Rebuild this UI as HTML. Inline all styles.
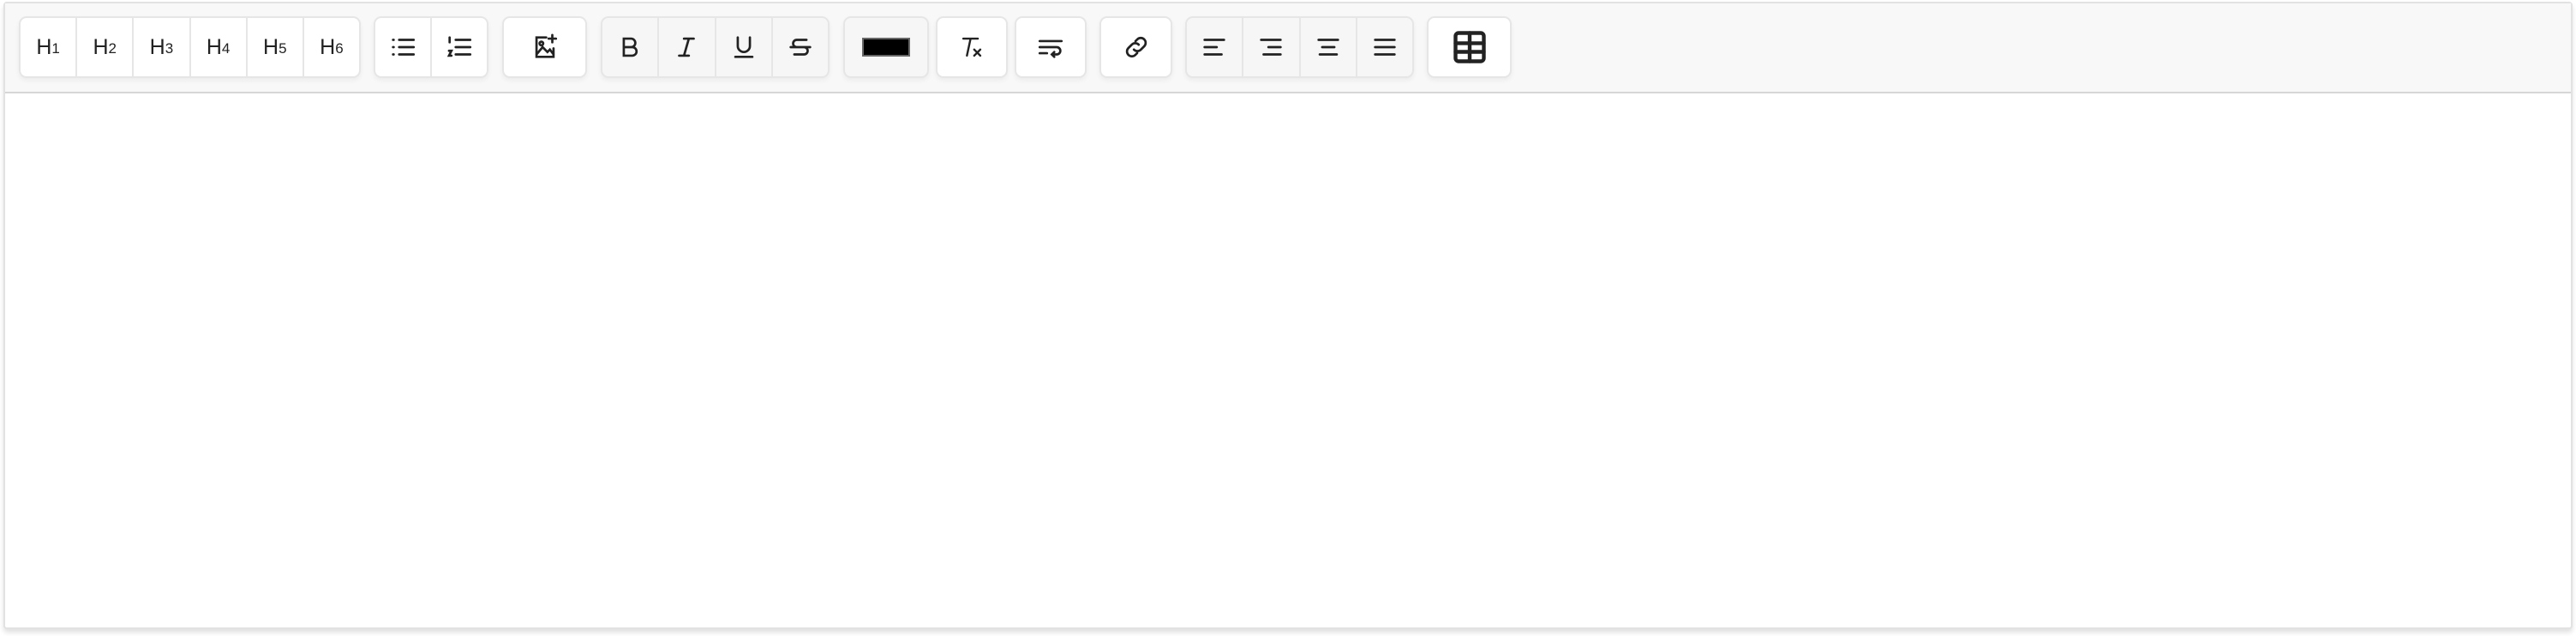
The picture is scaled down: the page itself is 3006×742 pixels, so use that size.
<!DOCTYPE html>
<html><head><meta charset="utf-8"><style>
*{box-sizing:border-box;margin:0;padding:0}
body{width:3006px;height:742px;background:#fff;font-family:"Liberation Sans",sans-serif;position:relative;overflow:hidden}
.ed{position:absolute;left:4px;top:2px;width:2998px;height:732px;border:2px solid #e2e2e2;border-radius:4px;box-shadow:0 4px 6px rgba(0,0,0,.12);background:#fff}
.tb{position:absolute;left:0;top:0;right:0;height:105px;background:#f8f8f8;border-bottom:2px solid #d6d6d6}
.g{position:absolute;top:15px;height:72px;display:flex;background:#fff;border:2px solid #e6e6e6;border-radius:9px;box-shadow:0 3px 6px rgba(0,0,0,.05);overflow:hidden}
.g.gr{background:#f6f6f6}
.b{flex:1;display:flex;align-items:center;justify-content:center;border-right:2px solid #e6e6e6;color:#222;font-size:25px}
.b:last-child{border-right:none}
.b sub{font-size:17px;vertical-align:baseline;position:relative;top:2px}
svg{width:34px;height:34px;fill:none;stroke:#222;stroke-width:1.9;stroke-linecap:round}
</style></head><body>
<div class="ed"><div class="tb">
<div class="g" style="left:16px;width:399px">
<div class="b">H<sub>1</sub></div><div class="b">H<sub>2</sub></div><div class="b">H<sub>3</sub></div><div class="b">H<sub>4</sub></div><div class="b">H<sub>5</sub></div><div class="b">H<sub>6</sub></div></div>
<div class="g" style="left:430px;width:134px">
<div class="b"><svg viewBox="0 0 24 24"><path d="M9 6h12M9 12h12M9 18h12M4 6h.5M4 12h.5M4 18h.5"/></svg></div>
<div class="b"><svg viewBox="0 0 24 24"><path d="M9 6h12M9 12h12M9 18h12M4 4v4M3.5 15h2l-2 4h2"/></svg></div></div>
<div class="g" style="left:580px;width:99px">
<div class="b"><svg viewBox="0 0 24 24"><path d="M13 4H5v16h14v-7M5 18l5-6 4 4 2-2 3 4M18 2v6M15 5h6"/><circle cx="9" cy="9" r="1.5"/></svg></div></div>
<div class="g gr" style="left:695px;width:267px">
<div class="b"><svg viewBox="0 0 24 24"><path d="M7 5h6a3.5 3.5 0 0 1 0 7H7zM7 12h7a3.5 3.5 0 0 1 0 7H7z"/></svg></div>
<div class="b"><svg viewBox="0 0 24 24"><path d="M10 5h8M6 19h8M14 5l-4 14"/></svg></div>
<div class="b"><svg viewBox="0 0 24 24"><path d="M7 4v7a5 5 0 0 0 10 0V4M5 20h14"/></svg></div>
<div class="b"><svg viewBox="0 0 24 24"><path d="M17 6H9a3 3 0 0 0 0 6h6a3 3 0 0 1 0 6H7M4 12h16"/></svg></div></div>
<div class="g gr" style="left:978px;width:100px"><div class="b"><div style="width:56px;height:22px;background:#000;border:2px solid #666"></div></div></div>
<div class="g" style="left:1086px;width:84px"><div class="b"><svg viewBox="0 0 24 24"><path d="M5 5h12M11 5L8 19M14 14l5 5M19 14l-5 5" stroke-width="1.7"/></svg></div></div>
<div class="g" style="left:1178px;width:84px"><div class="b"><svg viewBox="0 0 24 24"><path d="M3 7h18M3 12h14a3 3 0 0 1 0 6h-4M15 16l-2 2 2 2M3 17h6"/></svg></div></div>
<div class="g" style="left:1277px;width:85px"><div class="b"><svg viewBox="0 0 24 24"><path d="M10 14a4 4 0 0 0 5.5.3l3-3a4 4 0 0 0-5.7-5.7l-1.5 1.5M14 10a4 4 0 0 0-5.5-.3l-3 3a4 4 0 0 0 5.7 5.7l1.5-1.5"/></svg></div></div>
<div class="g gr" style="left:1377px;width:267px">
<div class="b"><svg viewBox="0 0 24 24"><path d="M4 6h16M4 12h10M4 18h14"/></svg></div>
<div class="b"><svg viewBox="0 0 24 24"><path d="M4 6h16M10 12h10M6 18h14"/></svg></div>
<div class="b"><svg viewBox="0 0 24 24"><path d="M4 6h16M7 12h10M5 18h14"/></svg></div>
<div class="b"><svg viewBox="0 0 24 24"><path d="M4 6h16M4 12h16M4 18h16"/></svg></div></div>
<div class="g" style="left:1659px;width:99px"><div class="b"><svg viewBox="0 0 24 24" style="width:44px;height:44px"><rect x="3" y="3" width="18" height="18" rx="2" stroke-width="2.4"/><path d="M3 9.5h18M3 15h18M12 3v18" stroke-width="2.4"/></svg></div></div>
</div></div>
</body></html>
